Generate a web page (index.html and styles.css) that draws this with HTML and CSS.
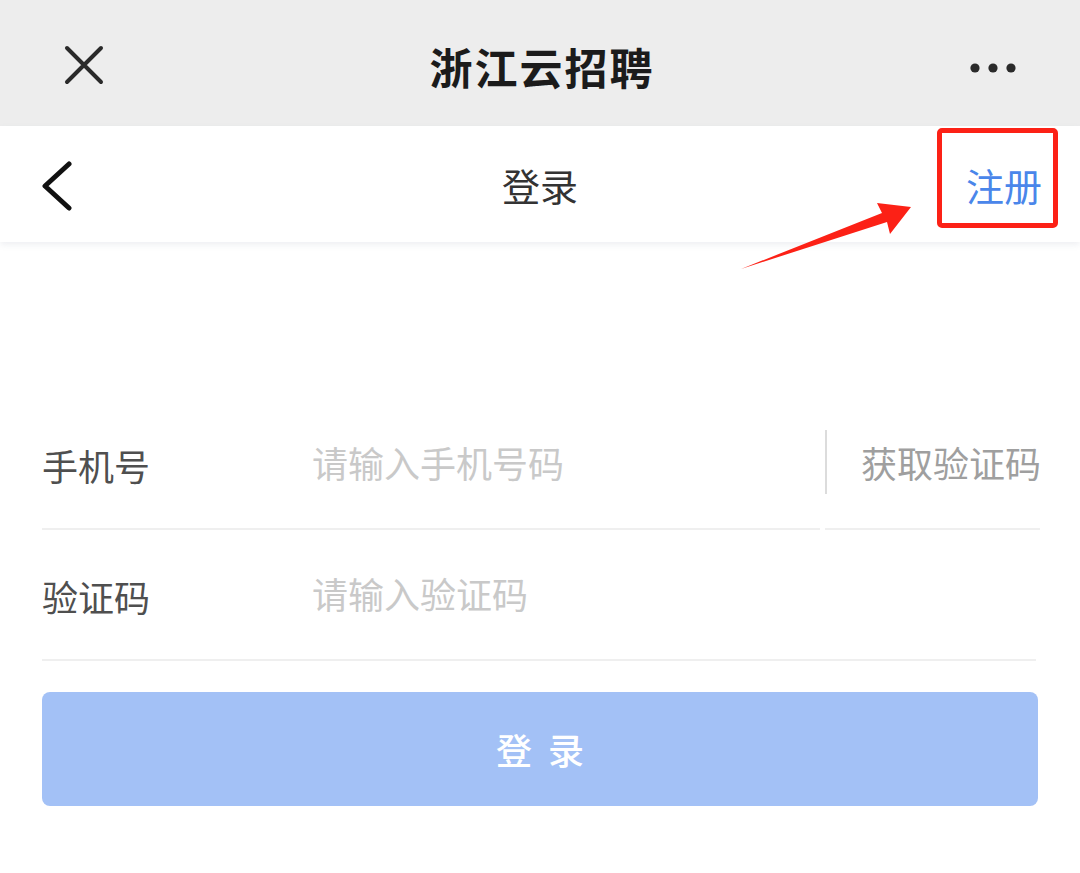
FILE: index.html
```html
<!DOCTYPE html>
<html lang="zh-CN">
<head>
<meta charset="utf-8">
<title>浙江云招聘</title>
<link rel="stylesheet" href="styles.css">
</head>
<body>
<div class="page">
  <header class="topbar">
    <div class="topbar-left">
      <svg class="icon-close" width="40" height="40" viewBox="0 0 40 40">
        <path d="M3 3 L37 37 M37 3 L3 37" stroke="#2a2a2a" stroke-width="4" stroke-linecap="round" fill="none"/>
      </svg>
    </div>
    <h1 class="topbar-title">浙江云招聘</h1>
    <div class="topbar-right">
      <svg class="icon-more" width="50" height="12" viewBox="0 0 50 12">
        <circle cx="5" cy="6" r="4.6" fill="#2a2a2a"/>
        <circle cx="23" cy="6" r="4.6" fill="#2a2a2a"/>
        <circle cx="41" cy="6" r="4.6" fill="#2a2a2a"/>
      </svg>
    </div>
  </header>

  <nav class="navbar">
    <div class="nav-left">
      <svg class="icon-back" width="32" height="50" viewBox="0 0 32 50">
        <path d="M27 3 L3 25 L27 47" stroke="#111" stroke-width="5" stroke-linecap="round" stroke-linejoin="round" fill="none"/>
      </svg>
    </div>
    <div class="nav-title">登录</div>
    <div class="nav-right">注册</div>
  </nav>

  <main class="form">
    <div class="row row-phone">
      <div class="field">
        <span class="label">手机号</span>
        <span class="placeholder">请输入手机号码</span>
      </div>
      <div class="code-wrap">
        <span class="code-btn">获取验证码</span>
      </div>
    </div>
    <div class="row row-code">
      <div class="field">
        <span class="label">验证码</span>
        <span class="placeholder">请输入验证码</span>
      </div>
    </div>
    <button class="submit">登录</button>
  </main>

  <div class="mark-box"></div>
  <svg class="mark-arrow" width="1080" height="873" viewBox="0 0 1080 873">
    <polygon points="741,269 882,213 877,203 911,207 890,234 887,222" fill="#fc2116"/>
  </svg>
</div>
</body>
</html>
```

FILE: styles.css
```css
* {
  box-sizing: border-box;
}

html, body {
  margin: 0;
  padding: 0;
  background: #ffffff;
}

body {
  font-family: "Noto Sans CJK SC", "Noto Sans", sans-serif;
  width: 1080px;
  height: 873px;
  overflow: hidden;
}

.page {
  position: relative;
  width: 1080px;
  height: 873px;
}

/* top bar */
.topbar {
  height: 126px;
  background: #ededed;
  display: flex;
  align-items: center;
  justify-content: space-between;
  padding: 0 60px 0 64px;
}

.topbar-left,
.topbar-right {
  width: 60px;
  display: flex;
  align-items: center;
}

.topbar-right {
  justify-content: flex-end;
}

.icon-close {
  display: block;
  margin-top: 4px;
}

.icon-more {
  display: block;
  margin-top: 10px;
}

.topbar-title {
  margin: 0;
  font-size: 43px;
  font-weight: 700;
  color: #1b1b1b;
  letter-spacing: 2px;
  line-height: 1;
  margin-top: 6px;
}

/* nav bar */
.navbar {
  height: 116px;
  background: #ffffff;
  display: flex;
  align-items: center;
  justify-content: space-between;
  padding: 0 38px 0 42px;
  box-shadow: 0 3px 6px rgba(120, 130, 160, 0.12);
  position: relative;
}

.nav-left {
  width: 120px;
  display: flex;
  align-items: center;
}

.icon-back {
  display: block;
  margin-top: 4px;
}

.nav-title {
  font-size: 38px;
  color: #333333;
  line-height: 1;
  margin-top: 2px;
  margin-right: 4px;
}

.nav-right {
  width: 120px;
  text-align: right;
  font-size: 38px;
  color: #4a86ea;
  line-height: 1;
  margin-top: 2px;
}

/* form */
.form {
  padding: 157px 40px 0 42px;
}

.row {
  display: flex;
  height: 131px;
}

.field {
  flex: 1;
  display: flex;
  align-items: center;
  border-bottom: 2px solid #efefef;
}

.label {
  width: 270px;
  font-size: 36px;
  color: #4f4f4f;
  line-height: 1;
  margin-top: 2px;
}

.placeholder {
  font-size: 36px;
  color: #c9c9c9;
  line-height: 1;
  margin-top: -4px;
}

.code-wrap {
  width: 215px;
  margin-left: 5px;
  display: flex;
  align-items: center;
  border-bottom: 2px solid #efefef;
}

.code-btn {
  display: flex;
  align-items: center;
  height: 64px;
  border-left: 2px solid #dcdcdc;
  padding-left: 34px;
  font-size: 36px;
  color: #9f9f9f;
  line-height: 1;
  margin-top: -4px;
  white-space: nowrap;
}

.row-code .field {
  margin-right: 4px;
}

.submit {
  display: block;
  width: 996px;
  height: 114px;
  margin-top: 31px;
  border: none;
  border-radius: 8px;
  background: #a3c1f6;
  color: #ffffff;
  font-family: "Noto Sans CJK SC", "Noto Sans", sans-serif;
  font-size: 36px;
  font-weight: 500;
  letter-spacing: 16px;
  text-indent: 16px;
  padding: 0;
}

/* annotation overlays */
.mark-box {
  position: absolute;
  left: 937px;
  top: 128px;
  width: 121px;
  height: 100px;
  border: 5px solid #fc2116;
  border-radius: 5px;
}

.mark-arrow {
  position: absolute;
  left: 0;
  top: 0;
  pointer-events: none;
}
```
